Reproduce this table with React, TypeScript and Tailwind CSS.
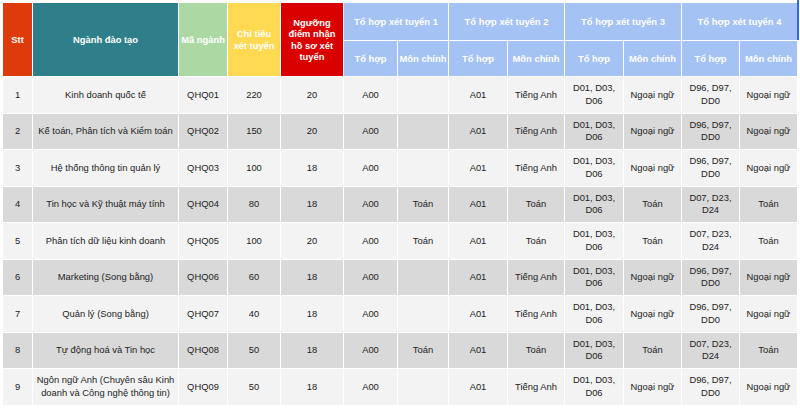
import React from "react";

type Row = {
  stt: number;
  name: string;
  code: string;
  quota: number;
  floor: number;
  th1: string;
  m1: string;
  th2: string;
  m2: string;
  th3: string;
  m3: string;
  th4: string;
  m4: string;
};

const rows: Row[] = [
  { stt: 1, name: "Kinh doanh quốc tế", code: "QHQ01", quota: 220, floor: 20, th1: "A00", m1: "", th2: "A01", m2: "Tiếng Anh", th3: "D01, D03, D06", m3: "Ngoại ngữ", th4: "D96, D97, DD0", m4: "Ngoại ngữ" },
  { stt: 2, name: "Kế toán, Phân tích và Kiểm toán", code: "QHQ02", quota: 150, floor: 20, th1: "A00", m1: "", th2: "A01", m2: "Tiếng Anh", th3: "D01, D03, D06", m3: "Ngoại ngữ", th4: "D96, D97, DD0", m4: "Ngoại ngữ" },
  { stt: 3, name: "Hệ thống thông tin quản lý", code: "QHQ03", quota: 100, floor: 18, th1: "A00", m1: "", th2: "A01", m2: "Tiếng Anh", th3: "D01, D03, D06", m3: "Ngoại ngữ", th4: "D96, D97, DD0", m4: "Ngoại ngữ" },
  { stt: 4, name: "Tin học và Kỹ thuật máy tính", code: "QHQ04", quota: 80, floor: 18, th1: "A00", m1: "Toán", th2: "A01", m2: "Toán", th3: "D01, D03, D06", m3: "Toán", th4: "D07, D23, D24", m4: "Toán" },
  { stt: 5, name: "Phân tích dữ liệu kinh doanh", code: "QHQ05", quota: 100, floor: 20, th1: "A00", m1: "Toán", th2: "A01", m2: "Toán", th3: "D01, D03, D06", m3: "Toán", th4: "D07, D23, D24", m4: "Toán" },
  { stt: 6, name: "Marketing (Song bằng)", code: "QHQ06", quota: 60, floor: 18, th1: "A00", m1: "", th2: "A01", m2: "Tiếng Anh", th3: "D01, D03, D06", m3: "Ngoại ngữ", th4: "D96, D97, DD0", m4: "Ngoại ngữ" },
  { stt: 7, name: "Quản lý (Song bằng)", code: "QHQ07", quota: 40, floor: 18, th1: "A00", m1: "", th2: "A01", m2: "Tiếng Anh", th3: "D01, D03, D06", m3: "Ngoại ngữ", th4: "D96, D97, DD0", m4: "Ngoại ngữ" },
  { stt: 8, name: "Tự động hoá và Tin học", code: "QHQ08", quota: 50, floor: 18, th1: "A00", m1: "Toán", th2: "A01", m2: "Toán", th3: "D01, D03, D06", m3: "Toán", th4: "D07, D23, D24", m4: "Toán" },
  { stt: 9, name: "Ngôn ngữ Anh (Chuyên sâu Kinh|doanh và Công nghệ thông tin)", code: "QHQ09", quota: 50, floor: 18, th1: "A00", m1: "", th2: "A01", m2: "Tiếng Anh", th3: "D01, D03, D06", m3: "Ngoại ngữ", th4: "D96, D97, DD0", m4: "Ngoại ngữ" },
];

const head = "flex items-center justify-center text-center font-bold text-white leading-[11.5px] whitespace-nowrap";
const cell = "flex items-center justify-center text-center text-[#222] leading-[12.5px] whitespace-nowrap";

function Lines({ parts }: { parts: string[] }) {
  return (
    <span>
      {parts.map((p, i) => (
        <React.Fragment key={i}>
          {i > 0 && <br />}
          {p}
        </React.Fragment>
      ))}
    </span>
  );
}

function Combo({ text }: { text: string }) {
  // "D01, D03, D06" wraps after the second code
  const parts = text.split(", ");
  if (parts.length < 3) return <>{text}</>;
  return <Lines parts={[`${parts[0]}, ${parts[1]},`, parts[2]]} />;
}

export default function App() {
  return (
    <div
      className="relative w-[800px] h-[408px] bg-white pt-[3px] pl-[3px] overflow-hidden text-[9.4px]"
      style={{ fontFamily: '"Liberation Sans", Arial, sans-serif' }}
    >
      <div className="grid gap-px grid-cols-[29px_145px_48px_52px_62px_53px_50px_58px_56px_58px_57px_57px_57px] grid-rows-[37px_35px_repeat(9,35.5px)]">
        <div className={`${head} row-span-2 bg-[#df3a0c]`}>Stt</div>
        <div className={`${head} row-span-2 bg-[#2f7f8b]`}>Ngành đào tạo</div>
        <div className={`${head} row-span-2 bg-[#abd8a3]`}>Mã ngành</div>
        <div className={`${head} row-span-2 bg-[#ffd952]`}>
          <Lines parts={["Chỉ tiêu", "xét tuyển"]} />
        </div>
        <div className={`${head} row-span-2 bg-[#da0000]`}>
          <Lines parts={["Ngưỡng", "điểm nhận", "hồ sơ xét", "tuyển"]} />
        </div>
        <div className={`${head} col-span-2 bg-[#a4c2f4]`}>Tổ hợp xét tuyển 1</div>
        <div className={`${head} col-span-2 bg-[#a4c2f4]`}>Tổ hợp xét tuyển 2</div>
        <div className={`${head} col-span-2 bg-[#a4c2f4]`}>Tổ hợp xét tuyển 3</div>
        <div className={`${head} col-span-2 bg-[#a4c2f4]`}>Tổ hợp xét tuyển 4</div>
        {[1, 2, 3, 4].map((n) => (
          <React.Fragment key={n}>
            <div className={`${head} bg-[#a4c2f4]`}>Tổ hợp</div>
            <div className={`${head} bg-[#a4c2f4]`}>Môn chính</div>
          </React.Fragment>
        ))}

        {rows.map((r) => {
          const bg = r.stt % 2 === 1 ? "bg-[#f3f3f3]" : "bg-[#d9d9d9]";
          return (
            <React.Fragment key={r.stt}>
              <div className={`${cell} ${bg}`}>{r.stt}</div>
              <div className={`${cell} ${bg}`}>
                <Lines parts={r.name.split("|")} />
              </div>
              <div className={`${cell} ${bg}`}>{r.code}</div>
              <div className={`${cell} ${bg}`}>{r.quota}</div>
              <div className={`${cell} ${bg}`}>{r.floor}</div>
              <div className={`${cell} ${bg}`}>{r.th1}</div>
              <div className={`${cell} ${bg}`}>{r.m1}</div>
              <div className={`${cell} ${bg}`}>{r.th2}</div>
              <div className={`${cell} ${bg}`}>{r.m2}</div>
              <div className={`${cell} ${bg}`}>
                <Combo text={r.th3} />
              </div>
              <div className={`${cell} ${bg}`}>{r.m3}</div>
              <div className={`${cell} ${bg}`}>
                <Combo text={r.th4} />
              </div>
              <div className={`${cell} ${bg}`}>{r.m4}</div>
            </React.Fragment>
          );
        })}
      </div>
      {/* selection edge on the right */}
      <div className="absolute left-[797px] top-0 h-[40px] w-[2px] bg-[#2b6de0]" />
    </div>
  );
}
